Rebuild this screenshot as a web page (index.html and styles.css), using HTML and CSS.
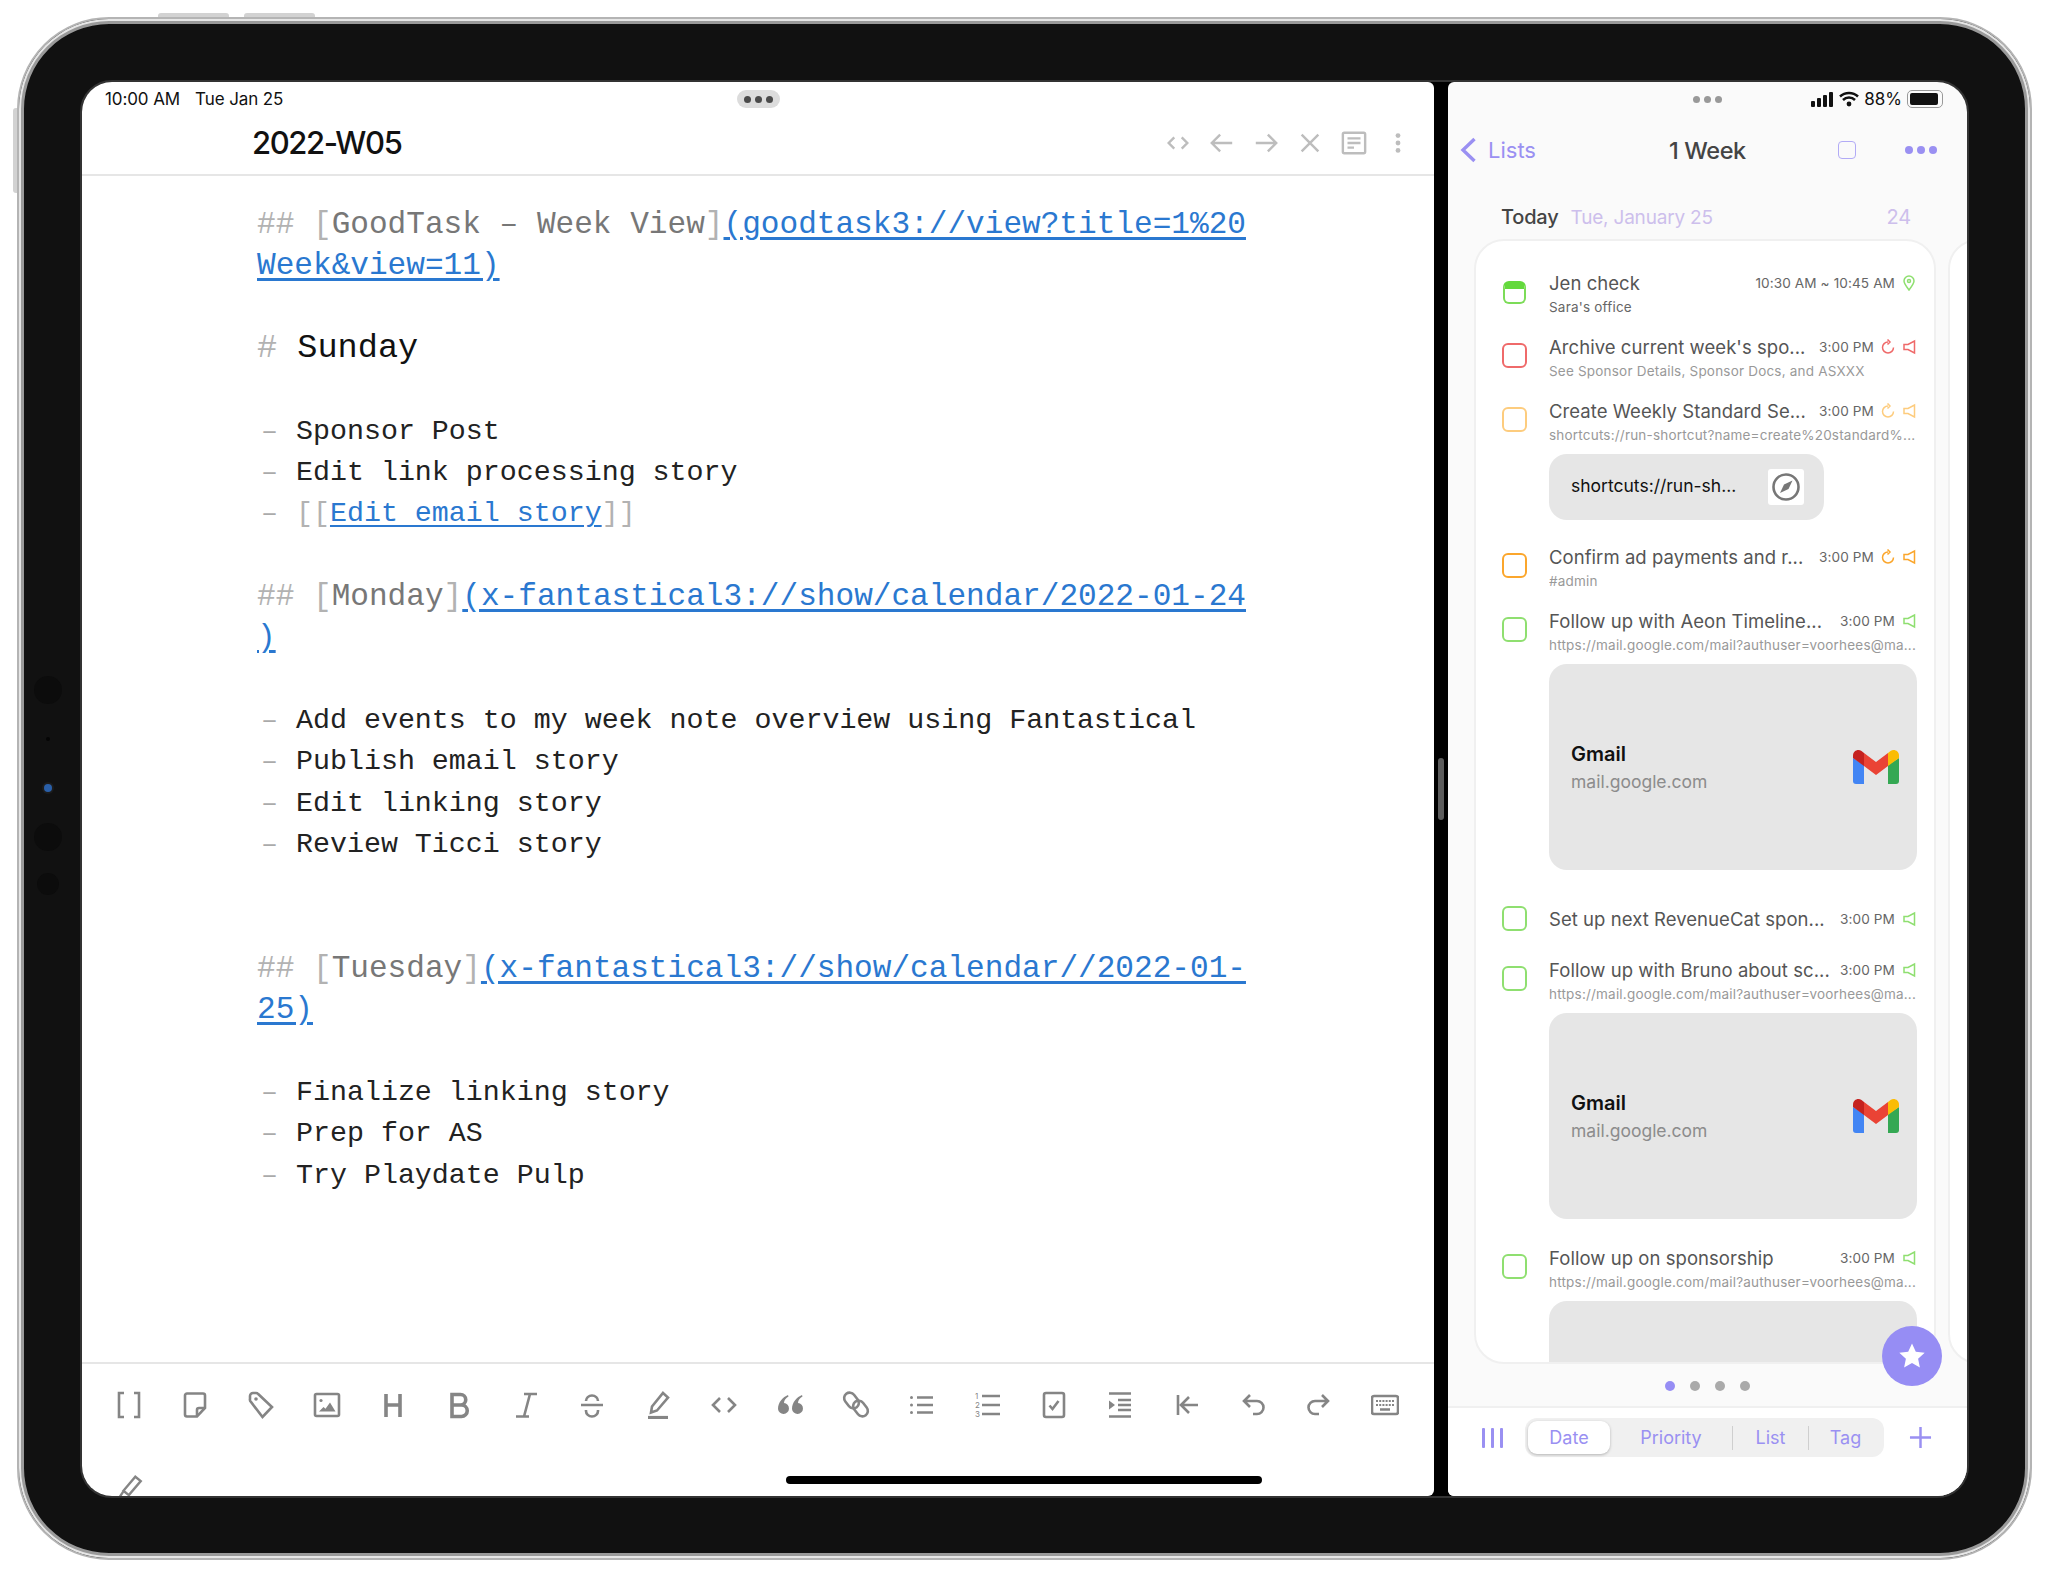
FILE: index.html
```html
<!DOCTYPE html>
<html lang="en">
<head>
<meta charset="UTF-8">
<meta name="viewport" content="width=device-width, initial-scale=1.0">
<title>iPad split view</title>
<link rel="stylesheet" href="styles.css">
</head>
<body>

<div class="device">
    <!-- hardware bits on the frame -->
    <span class="hw-btn hw-top-1"></span>
    <span class="hw-btn hw-top-2"></span>
    <span class="hw-btn hw-side"></span>
    <span class="cam cam-a"></span>
    <span class="cam cam-b"></span>
    <span class="cam cam-c"></span>
    <span class="cam cam-d"></span>
    <span class="cam cam-e"></span>

    <div class="screen">
        <!-- editor pane -->
        <section class="editor-pane">
            <header class="editor-head">
                <div class="status-row">
                    <div class="status-time"><span>10:00 AM</span><span>Tue Jan 25</span></div>
                    <div class="grabber"><i></i><i></i><i></i></div>
                    <div></div>
                </div>
                <div class="title-row">
                    <h1 class="note-title">2022-W05</h1>
                    <div class="head-icons">
                        <svg viewBox="0 0 28 28"><path d="M10 8l-6 6 6 6M18 8l6 6-6 6"/></svg>
                        <svg viewBox="0 0 28 28"><path d="M25 14H4M12 5l-9 9 9 9"/></svg>
                        <svg viewBox="0 0 28 28"><path d="M3 14h21M16 5l9 9-9 9"/></svg>
                        <svg viewBox="0 0 28 28"><path d="M5 5l18 18M23 5L5 23"/></svg>
                        <svg viewBox="0 0 28 28"><rect x="2" y="3" width="24" height="22" rx="1.5"/><path d="M7 9h14M7 14h14M7 19h7"/></svg>
                        <svg viewBox="0 0 28 28"><circle class="solid" cx="14" cy="6" r="2.6"/><circle class="solid" cx="14" cy="14" r="2.6"/><circle class="solid" cx="14" cy="22" r="2.6"/></svg>
                    </div>
                </div>
            </header>

            <div class="editor-body">
                <div class="ln h2"><span class="mark">## [</span><span class="label">GoodTask – Week View</span><span class="mark">]</span><a class="url">(goodtask3://view?title=1%20</a></div>
                <div class="ln h2"><a class="url">Week&amp;view=11)</a></div>
                <div class="ln"></div>
                <div class="ln h1"><span class="mark">#</span> Sunday</div>
                <div class="ln"></div>
                <div class="ln li"><span class="dash">–</span>Sponsor Post</div>
                <div class="ln li"><span class="dash">–</span>Edit link processing story</div>
                <div class="ln li"><span class="dash">–</span><span class="mark">[[</span><a class="url">Edit email story</a><span class="mark">]]</span></div>
                <div class="ln"></div>
                <div class="ln h2"><span class="mark">## [</span><span class="label">Monday</span><span class="mark">]</span><a class="url">(x-fantastical3://show/calendar/2022-01-24</a></div>
                <div class="ln h2"><a class="url">)</a></div>
                <div class="ln"></div>
                <div class="ln li"><span class="dash">–</span>Add events to my week note overview using Fantastical</div>
                <div class="ln li"><span class="dash">–</span>Publish email story</div>
                <div class="ln li"><span class="dash">–</span>Edit linking story</div>
                <div class="ln li"><span class="dash">–</span>Review Ticci story</div>
                <div class="ln"></div>
                <div class="ln"></div>
                <div class="ln h2"><span class="mark">## [</span><span class="label">Tuesday</span><span class="mark">]</span><a class="url">(x-fantastical3://show/calendar//2022-01-</a></div>
                <div class="ln h2"><a class="url">25)</a></div>
                <div class="ln"></div>
                <div class="ln li"><span class="dash">–</span>Finalize linking story</div>
                <div class="ln li"><span class="dash">–</span>Prep for AS</div>
                <div class="ln li"><span class="dash">–</span>Try Playdate Pulp</div>
            </div>

            <div class="toolbar">
                <svg viewBox="0 0 28 28"><path d="M9 2H4v24h5M19 2h5v24h-5"/></svg>
                <svg viewBox="0 0 28 28"><path d="M6 2.5h16a2 2 0 0 1 2 2V17l-8 8.5H6a2 2 0 0 1-2-2v-19a2 2 0 0 1 2-2z"/><path d="M16 25v-6a2 2 0 0 1 2-2h6"/></svg>
                <svg viewBox="0 0 28 28"><path d="M3 8V5a3 3 0 0 1 3-3h3a3 3 0 0 1 2.2 1L25 16l-9.5 10L4 11a3 3 0 0 1-1-3z"/><circle class="solid" cx="9" cy="8" r="1.8"/></svg>
                <svg viewBox="0 0 28 28"><rect x="2" y="3" width="24" height="22" rx="1.5"/><circle class="solid" cx="8" cy="9.5" r="1.6"/><path class="solid" d="M6 20.5l4.5-4.5 2 1.8 4.5-6.3 5.5 9z"/></svg>
                <svg class="heavy" viewBox="0 0 28 28"><path d="M7 3v23M21 3v23M7 14h14"/></svg>
                <svg class="heavy" viewBox="0 0 28 28"><path d="M7 3.5h8.5a5.2 5.2 0 0 1 0 10.5H7zM7 14h9.5a5.7 5.7 0 0 1 0 11.5H7z"/></svg>
                <svg viewBox="0 0 28 28"><path d="M12 3h13M4 25.5h13M18 3l-6 22.5"/></svg>
                <svg viewBox="0 0 28 28"><path d="M3 14h22M8 10a6 5.5 0 0 1 12 0M8 19v1a6 5.5 0 0 0 12 0v-1"/></svg>
                <svg viewBox="0 0 28 28"><path d="M19 2l5 4.5-11 13-6 2 1-6z"/><path class="thick" d="M4 26.5h20"/></svg>
                <svg viewBox="0 0 28 28"><path d="M10 7l-7 7 7 7M18 7l7 7-7 7"/></svg>
                <svg viewBox="0 0 28 28"><path class="solid" d="M12 4C7 6 2 11 2 18a5.5 5.5 0 1 0 6-6c0-3 2-5 4.5-6.5zM26 4c-5 2-10 7-10 14a5.5 5.5 0 1 0 6-6c0-3 2-5 4.5-6.5z"/></svg>
                <svg viewBox="0 0 28 28"><rect x="4" y="1" width="11" height="17" rx="5.5" transform="rotate(-38 9.5 9.5)"/><rect x="13" y="9" width="11" height="17" rx="5.5" transform="rotate(-38 18.5 17.5)"/></svg>
                <svg viewBox="0 0 28 28"><path d="M9 6.5h16M9 14h16M9 21.5h16"/><circle class="solid" cx="3.5" cy="6.5" r="1.5"/><circle class="solid" cx="3.5" cy="14" r="1.5"/><circle class="solid" cx="3.5" cy="21.5" r="1.5"/></svg>
                <svg viewBox="0 0 28 28"><text class="tiny-num" x="1" y="8">1</text><text class="tiny-num" x="1" y="17">2</text><text class="tiny-num" x="1" y="26">3</text><path d="M8 5h18M8 14h18M8 23h18"/></svg>
                <svg viewBox="0 0 28 28"><rect x="4" y="2" width="20" height="24" rx="2"/><path d="M9.5 14.5l3 3.5 6-8"/></svg>
                <svg viewBox="0 0 28 28"><path d="M3 2.5h22M12 9h13M12 14h13M12 19h13M3 25.5h22"/><path class="solid" d="M3 9.5l6 4.5-6 4.5z"/></svg>
                <svg viewBox="0 0 28 28"><path d="M5 4v20M25 14H9M16 6l-8 8 8 8"/></svg>
                <svg viewBox="0 0 28 28"><path d="M11 4l-6 6 6 6M5 10h13a5.5 5.5 0 0 1 0 13h-4"/></svg>
                <svg viewBox="0 0 28 28"><path d="M17 4l6 6-6 6M23 10H10a5.5 5.5 0 0 0 0 13h4"/></svg>
                <svg viewBox="0 0 28 28"><rect x="1" y="5" width="26" height="18" rx="2"/><path class="dots" d="M5 10h18M5 14h18"/><path d="M9 18.5h10"/></svg>
            </div>
            <svg class="clipped-pen" viewBox="0 0 24 24"><path d="M16 2.5l5 4-11 13-5-4zM5 16l-4 6"/></svg>
            <span class="home-bar"></span>
        </section>

        <div class="divider"><span></span></div>

        <!-- task pane -->
        <section class="task-pane">
            <div class="status-row">
                <div></div>
                <div class="grabber grabber-plain"><i></i><i></i><i></i></div>
                <div class="status-right">
                    <svg class="signal" viewBox="0 0 23 16"><rect x="0" y="10" width="4" height="6" rx="1"/><rect x="6" y="7" width="4" height="9" rx="1"/><rect x="12" y="4" width="4" height="12" rx="1"/><rect x="18" y="1" width="4" height="15" rx="1"/></svg>
                    <svg class="wifi" viewBox="0 0 20 16"><path d="M1 5.5a13 13 0 0 1 18 0M4 9a8.5 8.5 0 0 1 12 0"/><circle cx="10" cy="13" r="2.4"/></svg>
                    <span>88%</span>
                    <span class="battery"><i></i></span>
                </div>
            </div>

            <nav class="nav-row">
                <div class="nav-back">
                    <svg viewBox="0 0 17 26"><path d="M14.5 2L3 13l11.5 11"/></svg>
                    <span>Lists</span>
                </div>
                <div class="nav-title">1 Week</div>
                <div class="nav-actions">
                    <span class="nav-square"></span>
                    <span class="nav-dots"><i></i><i></i><i></i></span>
                </div>
            </nav>

            <div class="today-row">
                <span class="today-word">Today</span>
                <span class="today-date">Tue, January 25</span>
                <span class="today-count">24</span>
            </div>

            <div class="carousel">
                <div class="card">
                    <div class="item">
                        <span class="cal-check"></span>
                        <div class="item-body">
                            <div class="item-top">
                                <span class="item-title">Jen check</span>
                                <span class="item-time">10:30 AM ~ 10:45 AM</span>
                                <svg class="meta-icon green" viewBox="0 0 14 16"><path d="M7 15C4 11 2 8.5 2 6a5 5 0 0 1 10 0c0 2.5-2 5-5 9z"/><circle cx="7" cy="6" r="1.5"/></svg>
                            </div>
                            <div class="item-sub dark">Sara's office</div>
                        </div>
                    </div>

                    <div class="item">
                        <span class="check red"></span>
                        <div class="item-body">
                            <div class="item-top">
                                <span class="item-title">Archive current week's spo...</span>
                                <span class="item-time">3:00 PM</span>
                                <svg class="meta-icon red" viewBox="0 0 14 16"><path d="M7 3a5.5 5.5 0 1 0 5.5 5.5M6.5 .5L9 3 6.5 5.5"/></svg>
                                <svg class="meta-icon red" viewBox="0 0 14 16"><path d="M12.5 2v12L6 10.5H2v-5h4z"/></svg>
                            </div>
                            <div class="item-sub">See Sponsor Details, Sponsor Docs, and ASXXX</div>
                        </div>
                    </div>

                    <div class="item gap-chip">
                        <span class="check yellow"></span>
                        <div class="item-body">
                            <div class="item-top">
                                <span class="item-title">Create Weekly Standard Se...</span>
                                <span class="item-time">3:00 PM</span>
                                <svg class="meta-icon yellow" viewBox="0 0 14 16"><path d="M7 3a5.5 5.5 0 1 0 5.5 5.5M6.5 .5L9 3 6.5 5.5"/></svg>
                                <svg class="meta-icon yellow" viewBox="0 0 14 16"><path d="M12.5 2v12L6 10.5H2v-5h4z"/></svg>
                            </div>
                            <div class="item-sub">shortcuts://run-shortcut?name=create%20standard%...</div>
                            <div class="link-chip">
                                <span class="chip-text">shortcuts://run-sh...</span>
                                <span class="chip-icon">
                                    <svg viewBox="0 0 28 28"><circle cx="14" cy="14" r="12.5"/><path d="M20.5 7.5l-4 8.5-8.5 4 4-8.5z"/></svg>
                                </span>
                            </div>
                        </div>
                    </div>

                    <div class="item">
                        <span class="check orange"></span>
                        <div class="item-body">
                            <div class="item-top">
                                <span class="item-title">Confirm ad payments and r...</span>
                                <span class="item-time">3:00 PM</span>
                                <svg class="meta-icon orange" viewBox="0 0 14 16"><path d="M7 3a5.5 5.5 0 1 0 5.5 5.5M6.5 .5L9 3 6.5 5.5"/></svg>
                                <svg class="meta-icon orange" viewBox="0 0 14 16"><path d="M12.5 2v12L6 10.5H2v-5h4z"/></svg>
                            </div>
                            <div class="item-sub">#admin</div>
                        </div>
                    </div>

                    <div class="item gap-tall">
                        <span class="check green"></span>
                        <div class="item-body">
                            <div class="item-top">
                                <span class="item-title">Follow up with Aeon Timeline...</span>
                                <span class="item-time">3:00 PM</span>
                                <svg class="meta-icon green" viewBox="0 0 14 16"><path d="M12.5 2v12L6 10.5H2v-5h4z"/></svg>
                            </div>
                            <div class="item-sub">https://mail.google.com/mail?authuser=voorhees@ma...</div>
                            <div class="preview">
                                <div>
                                    <div class="preview-name">Gmail</div>
                                    <div class="preview-host">mail.google.com</div>
                                </div>
                                <svg class="gmail" viewBox="0 0 46 34">
                                    <path fill="#4285f4" d="M0 8v23a3 3 0 0 0 3 3h8V15z"/>
                                    <path fill="#34a853" d="M46 8v23a3 3 0 0 1-3 3h-8V15z"/>
                                    <path fill="#c5221f" d="M0 5.5C0 1 5 -1.5 8.5 1L11 3v13L0 8z"/>
                                    <path fill="#fbbc04" d="M46 5.5C46 1 41 -1.5 37.5 1L35 3v13l11-8z"/>
                                    <path fill="#ea4335" d="M11 3l12 9 12-9v13L23 25 11 16z"/>
                                </svg>
                            </div>
                        </div>
                    </div>

                    <div class="item single">
                        <span class="check green"></span>
                        <div class="item-body">
                            <div class="item-top">
                                <span class="item-title">Set up next RevenueCat spon...</span>
                                <span class="item-time">3:00 PM</span>
                                <svg class="meta-icon green" viewBox="0 0 14 16"><path d="M12.5 2v12L6 10.5H2v-5h4z"/></svg>
                            </div>
                        </div>
                    </div>

                    <div class="item gap-wide">
                        <span class="check green"></span>
                        <div class="item-body">
                            <div class="item-top">
                                <span class="item-title">Follow up with Bruno about sc...</span>
                                <span class="item-time">3:00 PM</span>
                                <svg class="meta-icon green" viewBox="0 0 14 16"><path d="M12.5 2v12L6 10.5H2v-5h4z"/></svg>
                            </div>
                            <div class="item-sub">https://mail.google.com/mail?authuser=voorhees@ma...</div>
                            <div class="preview">
                                <div>
                                    <div class="preview-name">Gmail</div>
                                    <div class="preview-host">mail.google.com</div>
                                </div>
                                <svg class="gmail" viewBox="0 0 46 34">
                                    <path fill="#4285f4" d="M0 8v23a3 3 0 0 0 3 3h8V15z"/>
                                    <path fill="#34a853" d="M46 8v23a3 3 0 0 1-3 3h-8V15z"/>
                                    <path fill="#c5221f" d="M0 5.5C0 1 5 -1.5 8.5 1L11 3v13L0 8z"/>
                                    <path fill="#fbbc04" d="M46 5.5C46 1 41 -1.5 37.5 1L35 3v13l11-8z"/>
                                    <path fill="#ea4335" d="M11 3l12 9 12-9v13L23 25 11 16z"/>
                                </svg>
                            </div>
                        </div>
                    </div>

                    <div class="item">
                        <span class="check green"></span>
                        <div class="item-body">
                            <div class="item-top">
                                <span class="item-title">Follow up on sponsorship</span>
                                <span class="item-time">3:00 PM</span>
                                <svg class="meta-icon green" viewBox="0 0 14 16"><path d="M12.5 2v12L6 10.5H2v-5h4z"/></svg>
                            </div>
                            <div class="item-sub">https://mail.google.com/mail?authuser=voorhees@ma...</div>
                            <div class="preview"></div>
                        </div>
                    </div>
                </div>
                <div class="card next-card"></div>
            </div>

            <button class="fab">
                <svg viewBox="0 0 28 28"><path d="M14 1.5l3.8 8.2 8.9 1-6.6 6 1.8 8.8-7.9-4.5-7.9 4.5 1.8-8.8-6.6-6 8.9-1z"/></svg>
            </button>

            <div class="page-dots"><i class="on"></i><i></i><i></i><i></i></div>

            <div class="bottom-bar">
                <span class="col-icon"><i></i><i></i><i></i></span>
                <div class="segments">
                    <span class="seg seg-date">Date</span>
                    <span class="seg seg-priority">Priority</span>
                    <span class="seg-line"></span>
                    <span class="seg seg-list">List</span>
                    <span class="seg-line"></span>
                    <span class="seg seg-tag">Tag</span>
                </div>
                <svg class="plus" viewBox="0 0 24 24"><path d="M12 1v22M1 12h22"/></svg>
            </div>
        </section>
    </div>
</div>

</body>
</html>
```

FILE: styles.css
```css
* {
    box-sizing: border-box;
}
body {
    margin: 0;
    padding: 17px;
    background: #fff;
    font-family: Inter, "Liberation Sans", sans-serif;
}

/* device frame */
.device {
    position: relative;
    width: 2015px;
    height: 1543px;
    padding: 63px;
    background: #111;
    border: 2px solid #b4b4b4;
    border-radius: 92px;
    box-shadow: inset 0 0 0 2px #e6e6e6, inset 0 0 0 5px #9a9a9a;
}
.hw-btn {
    position: absolute;
    background: #d2d2d2;
}
.hw-top-1, .hw-top-2 {
    top: -6px;
    width: 71px;
    height: 4px;
    border-radius: 3px 3px 0 0;
}
.hw-top-1 { left: 139px; }
.hw-top-2 { left: 225px; }
.hw-side {
    top: 89px;
    left: -6px;
    width: 4px;
    height: 85px;
    border-radius: 3px 0 0 3px;
}
.cam {
    position: absolute;
    border-radius: 50%;
    background: #0c0c0c;
}
.cam-a { left: 15px; top: 657px; width: 28px; height: 28px; }
.cam-b { left: 27px; top: 718px; width: 4px; height: 4px; background: #050505; }
.cam-c { left: 25px; top: 765px; width: 8px; height: 8px; background: #2a5fa8; box-shadow: 0 0 0 2px #1c1c1c; }
.cam-d { left: 15px; top: 804px; width: 28px; height: 28px; }
.cam-e { left: 18px; top: 854px; width: 22px; height: 22px; }

.screen {
    display: flex;
    width: 1885px;
    height: 1414px;
    background: #000;
    border-radius: 30px;
    outline: 2px solid #333;
    overflow: hidden;
}
.divider {
    display: flex;
    align-items: center;
    justify-content: center;
    flex: 0 0 14px;
}
.divider span {
    width: 6px;
    height: 62px;
    border-radius: 3px;
    background: #5c5c5c;
}

/* left pane */
.editor-pane {
    position: relative;
    display: flex;
    flex-direction: column;
    flex: 0 0 1352px;
    background: #fff;
    border-radius: 0 6px 6px 0;
    overflow: hidden;
}
.editor-head {
    height: 94px;
    border-bottom: 2px solid #e6e6e6;
}
.status-row {
    display: grid;
    grid-template-columns: 1fr auto 1fr;
    align-items: center;
    height: 34px;
}
.status-time {
    display: flex;
    gap: 15px;
    padding-left: 23px;
    font-size: 17px;
    letter-spacing: -0.1px;
    color: #111;
}
.grabber {
    display: flex;
    align-items: center;
    justify-content: center;
    gap: 4px;
    width: 43px;
    height: 18px;
    border-radius: 9px;
    background: #dcdcdc;
}
.grabber i {
    width: 7px;
    height: 7px;
    border-radius: 50%;
    background: #4a4a4a;
}
.grabber-plain {
    background: none;
}
.grabber-plain i {
    background: #999;
}
.title-row {
    display: flex;
    align-items: center;
    justify-content: space-between;
    height: 52px;
    padding: 0 14px 0 170px;
}
.note-title {
    margin: 0;
    font-size: 31px;
    font-weight: 500;
    letter-spacing: -1.4px;
    color: #111;
}
.head-icons {
    display: flex;
    margin-top: 2px;
}
.head-icons svg {
    width: 44px;
    height: 26px;
    fill: none;
    stroke: #bdbdbd;
    stroke-width: 2.6;
}
.head-icons .solid {
    fill: #bdbdbd;
    stroke: none;
}

/* markdown text */
.editor-body {
    flex: 1;
    padding: 28px 0 0 175px;
    font-family: "Liberation Mono", monospace;
    font-size: 28.3px;
    color: #222;
}
.ln {
    display: flex;
    height: 41.34px;
    line-height: 41.34px;
    white-space: pre;
}
.h2 { font-size: 31.1px; }
.h1 { font-size: 33.6px; color: #111; }
.mark { color: #b2b2b2; }
.label { color: #777; }
.url {
    color: #2a78d0;
    text-decoration: underline;
    text-underline-offset: 4px;
}
.dash {
    width: 39px;
    padding-left: 4px;
    color: #aaa;
}

/* bottom toolbar */
.toolbar {
    display: flex;
    flex: 0 0 134px;
    padding: 27px 0 0 33px;
    border-top: 2px solid #e6e6e6;
}
.toolbar svg {
    flex: 0 0 28px;
    width: 28px;
    height: 28px;
    margin-right: 38.1px;
    fill: none;
    stroke: #858585;
    stroke-width: 2.6;
}
.toolbar .heavy { stroke-width: 3.6; }
.toolbar .thick { stroke-width: 3.2; }
.toolbar .solid {
    fill: #858585;
    stroke: none;
}
.toolbar .dots {
    stroke-dasharray: 2 1.2;
    stroke-width: 2;
}
.tiny-num {
    font-family: Inter, sans-serif;
    font-size: 8px;
    fill: #858585;
    stroke: none;
}
.clipped-pen {
    position: absolute;
    left: 36px;
    top: 1392px;
    width: 26px;
    height: 26px;
    fill: none;
    stroke: #858585;
    stroke-width: 2.2;
}
.home-bar {
    position: absolute;
    left: 704px;
    top: 1394px;
    width: 476px;
    height: 8px;
    border-radius: 4px;
    background: #000;
}

/* right pane */
.task-pane {
    position: relative;
    display: flex;
    flex-direction: column;
    flex: 0 0 519px;
    background: #fafafa;
    border-radius: 6px 0 0 6px;
    overflow: hidden;
}
.status-right {
    display: flex;
    align-items: center;
    justify-content: flex-end;
    gap: 5px;
    padding-right: 24px;
    font-size: 17px;
    color: #111;
}
.signal {
    width: 23px;
    height: 16px;
    fill: #111;
}
.wifi {
    width: 20px;
    height: 16px;
    fill: #111;
    stroke: none;
}
.wifi path {
    fill: none;
    stroke: #111;
    stroke-width: 2.5;
}
.battery {
    display: flex;
    width: 36px;
    height: 18px;
    padding: 2px;
    border: 1.5px solid #999;
    border-radius: 5px;
}
.battery i {
    width: 28px;
    border-radius: 2px;
    background: #111;
}

.nav-row {
    display: grid;
    grid-template-columns: 1fr auto 1fr;
    align-items: center;
    height: 68px;
    padding: 0 30px;
}
.nav-back {
    display: flex;
    align-items: center;
    gap: 11px;
    margin-left: -18px;
    font-size: 22px;
    color: #9a90f2;
}
.nav-back svg {
    width: 17px;
    height: 26px;
    fill: none;
    stroke: #9a90f2;
    stroke-width: 3.4;
}
.nav-title {
    font-size: 23.5px;
    font-weight: 500;
    letter-spacing: -0.4px;
    color: #444;
}
.nav-actions {
    display: flex;
    align-items: center;
    justify-content: flex-end;
    gap: 49px;
}
.nav-square {
    width: 18px;
    height: 18px;
    border: 1.5px solid #b2abf6;
    border-radius: 4px;
}
.nav-dots {
    display: flex;
    gap: 4px;
}
.nav-dots i {
    width: 8px;
    height: 8px;
    border-radius: 50%;
    background: #9a90f2;
}

.today-row {
    display: flex;
    align-items: center;
    height: 55px;
    padding: 11px 56px 0 53px;
    font-size: 20px;
    letter-spacing: -0.2px;
}
.today-word {
    font-weight: 500;
    color: #444;
}
.today-date {
    margin-left: 12px;
    font-size: 19px;
    color: #cdbfec;
}
.today-count {
    margin-left: auto;
    color: #cdbfec;
}

.carousel {
    display: flex;
    flex: 0 0 1125px;
    gap: 12px;
    padding-left: 26px;
    overflow: hidden;
}
.card {
    flex: 0 0 462px;
    height: 1125px;
    padding: 30px 18px 0 26px;
    background: #fff;
    border: 2px solid #f0f0f0;
    border-radius: 30px;
    overflow: hidden;
}
.item {
    display: flex;
    margin-bottom: 16px;
}
.item.gap-chip {
    margin-bottom: 25px;
}
.item.gap-tall {
    margin-bottom: 36px;
}
.item.gap-wide {
    margin-bottom: 27px;
}
.item.single {
    align-items: center;
    margin-bottom: 27px;
}
.check, .cal-check {
    flex: 0 0 25px;
    height: 25px;
    margin: 8px 22px 0 0;
    border: 2px solid;
    border-radius: 6px;
    background: #fff;
}
.single .check {
    margin-top: 0;
}
.check.red { border-color: #ef6a6a; }
.check.yellow { border-color: #fdcc7e; }
.check.orange { border-color: #fba62c; }
.check.green { border-color: #8fdf70; }
.cal-check {
    flex: 0 0 23px;
    height: 23px;
    margin: 10px 23px 0 1px;
    border-color: #7cdc58;
    border-top: 8px solid #63d93c;
}
.item-body {
    flex: 1;
    min-width: 0;
}
.item-top {
    display: flex;
    align-items: center;
    gap: 7px;
    height: 24px;
}
.item-title {
    flex: 1;
    font-size: 18.5px;
    letter-spacing: 0.05px;
    color: #555;
    white-space: nowrap;
}
.item-time {
    font-size: 13.6px;
    letter-spacing: 0.1px;
    color: #666;
    white-space: nowrap;
}
.meta-icon {
    flex: 0 0 14px;
    height: 16px;
    fill: none;
    stroke-width: 1.5;
}
.meta-icon.red { stroke: #ef6a6a; }
.meta-icon.yellow { stroke: #fdcc7e; }
.meta-icon.orange { stroke: #fba62c; }
.meta-icon.green { stroke: #8fdf70; }
.item-sub {
    height: 24px;
    line-height: 24px;
    font-size: 13.5px;
    letter-spacing: 0.2px;
    color: #999;
    white-space: nowrap;
    overflow: hidden;
}
.item-sub.dark {
    color: #666;
}
.link-chip {
    display: flex;
    align-items: center;
    justify-content: space-between;
    width: 275px;
    height: 66px;
    margin-top: 7px;
    padding: 0 20px 0 22px;
    border-radius: 18px;
    background: #e6e6e6;
    font-size: 17.5px;
    color: #111;
}
.chip-text {
    margin-bottom: 4px;
}
.chip-icon {
    display: flex;
    align-items: center;
    justify-content: center;
    width: 36px;
    height: 36px;
    border-radius: 3px;
    background: #fff;
}
.chip-icon svg {
    width: 28px;
    height: 28px;
    fill: none;
    stroke: #777;
    stroke-width: 2.6;
}
.chip-icon path {
    fill: #777;
    stroke: none;
}
.preview {
    display: flex;
    align-items: center;
    justify-content: space-between;
    width: 368px;
    height: 206px;
    margin-top: 7px;
    padding: 0 18px 0 22px;
    border-radius: 18px;
    background: #e6e6e6;
}
.preview-name {
    font-size: 20px;
    font-weight: 600;
    color: #111;
}
.preview-host {
    margin-top: 5px;
    font-size: 17.5px;
    color: #8c8c8c;
}
.gmail {
    width: 46px;
    height: 34px;
}

.fab {
    position: absolute;
    left: 434px;
    top: 1244px;
    display: flex;
    align-items: center;
    justify-content: center;
    width: 60px;
    height: 60px;
    padding: 0;
    border: none;
    border-radius: 50%;
    background: #968df4;
}
.fab svg {
    width: 28px;
    height: 28px;
    fill: #fff;
}
.page-dots {
    display: flex;
    align-items: center;
    justify-content: center;
    gap: 15px;
    flex: 0 0 42px;
    padding-top: 2px;
}
.page-dots i {
    width: 10px;
    height: 10px;
    border-radius: 50%;
    background: #aaa;
}
.page-dots .on {
    background: #968df4;
}

.bottom-bar {
    display: flex;
    align-items: flex-start;
    flex: 1;
    padding: 10px 0 0 34px;
    background: #fff;
    border-top: 2px solid #f0f0f0;
}
.col-icon {
    display: flex;
    justify-content: space-between;
    width: 21px;
    height: 20px;
    margin: 10px 22px 0 0;
}
.col-icon i {
    width: 3px;
    background: #9a90f2;
    border-radius: 1px;
}
.segments {
    display: flex;
    align-items: center;
    width: 359px;
    height: 39px;
    padding: 3px;
    border-radius: 12px;
    background: #f0f0f0;
}
.seg {
    font-size: 18px;
    line-height: 33px;
    text-align: center;
    color: #9a90f2;
}
.seg-date {
    flex: 0 0 82px;
    border-radius: 9px;
    background: #fff;
    box-shadow: 0 1px 3px rgba(0, 0, 0, 0.25);
}
.seg-priority { flex: 0 0 122px; }
.seg-list { flex: 0 0 75px; }
.seg-tag { flex: 0 0 73px; }
.seg-line {
    flex: 0 0 1px;
    height: 24px;
    background: #cfcfcf;
}
.plus {
    width: 23px;
    height: 23px;
    margin: 8px 0 0 25px;
    fill: none;
    stroke: #9a90f2;
    stroke-width: 2.6;
}
```
